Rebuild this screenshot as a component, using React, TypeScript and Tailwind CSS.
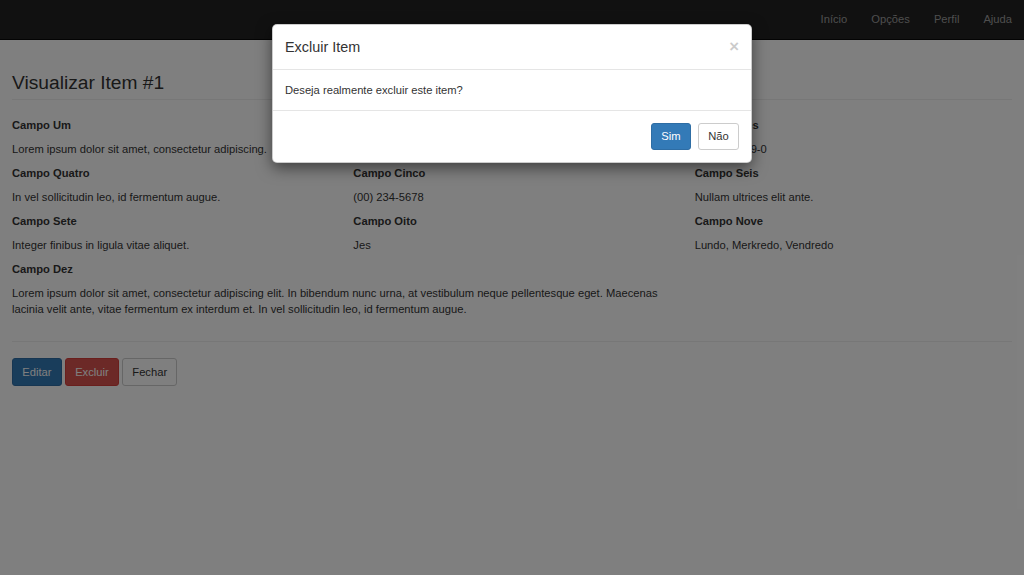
import React from "react";

const font = "font-['Liberation_Sans',Arial,sans-serif]";

function Field({ label, value, wide }: { label: string; value: string; wide?: boolean }) {
  return (
    <div className={`px-3 ${wide ? "col-span-2" : ""}`}>
      <div className="mb-2 font-bold">{label}</div>
      <div className="mb-2">{value}</div>
    </div>
  );
}

function Btn({ kind, children }: { kind: "primary" | "danger" | "default"; children: React.ReactNode }) {
  const cls =
    kind === "primary"
      ? "bg-[#337ab7] border-[#2e6da4] text-white"
      : kind === "danger"
      ? "bg-[#d9534f] border-[#d43f3a] text-white"
      : "bg-white border-[#ccc] text-[#333]";
  return (
    <button className={`${cls} border rounded-[3px] px-[9.3px] py-[4.8px] text-[11.2px] leading-[16px]`}>
      {children}
    </button>
  );
}

export default function App() {
  return (
    <div className={`relative h-[576px] overflow-hidden bg-white text-[#333] text-[11.2px] leading-[16px] ${font}`}>
      {/* navbar */}
      <div className="h-[40px] bg-[#222] border-b border-[#080808] flex justify-end">
        {["Início", "Opções", "Perfil", "Ajuda"].map((l) => (
          <a key={l} className="px-3 leading-[39px] text-[#9d9d9d]">
            {l}
          </a>
        ))}
      </div>

      {/* page */}
      <div className="pt-[32px]">
        <div className="mx-3 border-b border-[#eee] pb-[6px]">
          <h3 className="text-[19.2px] leading-[21px] font-medium">Visualizar Item #1</h3>
        </div>
        <div className="grid grid-cols-3 pt-[17px]">
          <Field label="Campo Um" value="Lorem ipsum dolor sit amet, consectetur adipiscing." />
          <Field label="Campo Dois" value="Donec sed odio dui." />
          <Field label="Campo Três" value="123.456.789-0" />
          <Field label="Campo Quatro" value="In vel sollicitudin leo, id fermentum augue." />
          <Field label="Campo Cinco" value="(00) 234-5678" />
          <Field label="Campo Seis" value="Nullam ultrices elit ante." />
          <Field label="Campo Sete" value="Integer finibus in ligula vitae aliquet." />
          <Field label="Campo Oito" value="Jes" />
          <Field label="Campo Nove" value="Lundo, Merkredo, Vendredo" />
          <Field
            wide
            label="Campo Dez"
            value="Lorem ipsum dolor sit amet, consectetur adipiscing elit. In bibendum nunc urna, at vestibulum neque pellentesque eget. Maecenas lacinia velit ante, vitae fermentum ex interdum et. In vel sollicitudin leo, id fermentum augue."
          />
        </div>
        <div className="mx-3 mt-4 border-t border-[#eee]" />
        <div className="mx-3 mt-4 flex gap-[3px]">
          <Btn kind="primary">Editar</Btn>
          <Btn kind="danger">Excluir</Btn>
          <Btn kind="default">Fechar</Btn>
        </div>
      </div>

      {/* backdrop */}
      <div className="absolute inset-x-0 top-0 bottom-[1px] bg-black/50" />

      {/* modal */}
      <div className="absolute inset-x-0 top-0 flex justify-center">
        <div className="mt-[24px] w-[480px] bg-white rounded-[5px] shadow-[0_5px_15px_rgba(0,0,0,0.5)] border border-black/20">
          <div className="flex items-start justify-between px-3 pt-3 pb-[11px] border-b border-[#e5e5e5]">
            <h4 className="text-[14.4px] leading-[20.6px]">Excluir Item</h4>
            <span className="text-[16.8px] leading-[16px] font-bold text-black opacity-20 mt-[2px]">×</span>
          </div>
          <div className="p-3">Deseja realmente excluir este item?</div>
          <div className="p-3 border-t border-[#e5e5e5] flex justify-end gap-[7px]">
            <Btn kind="primary">Sim</Btn>
            <Btn kind="default">Não</Btn>
          </div>
        </div>
      </div>
    </div>
  );
}
